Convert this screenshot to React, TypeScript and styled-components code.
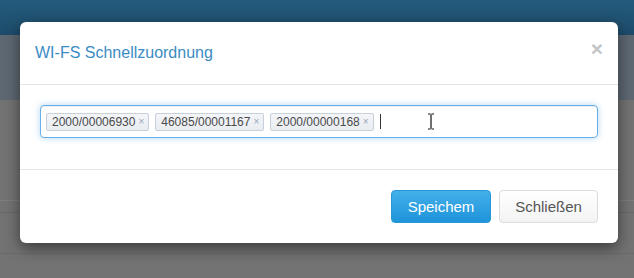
import React from 'react';
import styled, { createGlobalStyle } from 'styled-components';

const GlobalStyle = createGlobalStyle`
  html, body {
    margin: 0;
    padding: 0;
  }
  body {
    font-family: "Liberation Sans", Arial, sans-serif;
    background: #737373;
  }
`;

const Page = styled.div`
  position: relative;
  width: 634px;
  height: 278px;
  overflow: hidden;
  display: flex;
  flex-direction: column;
  background: #737373;
`;

const Navbar = styled.div`
  height: 35px;
  background: linear-gradient(to bottom, #245b7d, #1d4c6a);
`;

const SubHeader = styled.div`
  height: 65px;
  background: #5e6873;
`;

const Content = styled.div`
  flex: 1;
  display: flex;
  flex-direction: column;
`;

const Row = styled.div<{ $h: number; $line: string }>`
  height: ${(p) => p.$h}px;
  border-bottom: 1px solid ${(p) => p.$line};
`;

const Modal = styled.div`
  position: absolute;
  left: 20px;
  top: 22px;
  width: 598px;
  background: #fff;
  border-radius: 6px;
  box-shadow: 0 5px 15px rgba(0, 0, 0, 0.5);
`;

const Header = styled.div`
  display: flex;
  align-items: center;
  justify-content: space-between;
  padding: 19px 15px 19px 15px;
  border-bottom: 1px solid #e5e5e5;
`;

const Title = styled.h4`
  margin: 0;
  font-size: 16px;
  font-weight: normal;
  line-height: 24px;
  color: #3a8cc4;
`;

const Close = styled.span`
  font-size: 21px;
  font-weight: bold;
  line-height: 1;
  color: #c4c4c4;
  margin-top: -10px;
  margin-right: 0;
`;

const Body = styled.div`
  padding: 20px 20px 31px 20px;
  border-bottom: 1px solid #e5e5e5;
`;

const TagInput = styled.div`
  position: relative;
  height: 33px;
  box-sizing: border-box;
  border: 1px solid #66afe9;
  border-radius: 4px;
  box-shadow: inset 0 1px 1px rgba(0, 0, 0, 0.075), 0 0 6px rgba(102, 175, 233, 0.5);
  display: flex;
  align-items: center;
  gap: 6px;
  padding: 0 5px;
`;

const Tag = styled.span`
  display: inline-flex;
  align-items: center;
  height: 18px;
  box-sizing: border-box;
  padding: 0 4px 0 5px;
  background: linear-gradient(to bottom, #f3f5f8, #e9edf2);
  border: 1px solid #c8d0db;
  border-radius: 2px;
  font-size: 12px;
  color: #4a4a4a;
`;

const TagRemove = styled.span`
  margin-left: 3px;
  font-size: 10px;
  color: #9aa7b8;
`;

const Caret = styled.span`
  width: 1px;
  height: 15px;
  background: #333;
`;

const Pointer = styled.svg`
  position: absolute;
  left: 386px;
  top: 7px;
`;

const Footer = styled.div`
  display: flex;
  justify-content: flex-end;
  gap: 8px;
  padding: 20px;
`;

const Button = styled.button<{ $primary?: boolean }>`
  height: 33px;
  width: ${(p) => (p.$primary ? 100 : 99)}px;
  border-radius: 4px;
  font-family: "Liberation Sans", Arial, sans-serif;
  font-size: 15px;
  cursor: pointer;
  border: 1px solid ${(p) => (p.$primary ? '#2a96d6' : '#dcdcdc')};
  color: ${(p) => (p.$primary ? '#fff' : '#555')};
  background: ${(p) =>
    p.$primary
      ? 'linear-gradient(to bottom, #44afea, #1e94da)'
      : 'linear-gradient(to bottom, #ffffff, #f3f3f3)'};
`;

const tags = ['2000/00006930', '46085/00001167', '2000/00000168'];

const App: React.FC = () => {
  return (
    <Page>
      <GlobalStyle />
      <Navbar />
      <SubHeader />
      <Content>
        <Row $h={100} $line="#7e7e7e" />
        <Row $h={11} $line="#686868" />
        <Row $h={40} $line="#6a6a6a" />
      </Content>
      <Modal>
        <Header>
          <Title>WI-FS Schnellzuordnung</Title>
          <Close>×</Close>
        </Header>
        <Body>
          <TagInput>
            {tags.map((t) => (
              <Tag key={t}>
                {t}
                <TagRemove>×</TagRemove>
              </Tag>
            ))}
            <Caret />
            <Pointer width="8" height="17" viewBox="0 0 8 17">
              <path d="M1 1h2.5M4.5 1H7M4 1.5v14M1 16h2.5M4.5 16H7" stroke="#111" strokeWidth="1.2" fill="none" />
            </Pointer>
          </TagInput>
        </Body>
        <Footer>
          <Button $primary>Speichem</Button>
          <Button>Schließen</Button>
        </Footer>
      </Modal>
    </Page>
  );
};

export default App;
